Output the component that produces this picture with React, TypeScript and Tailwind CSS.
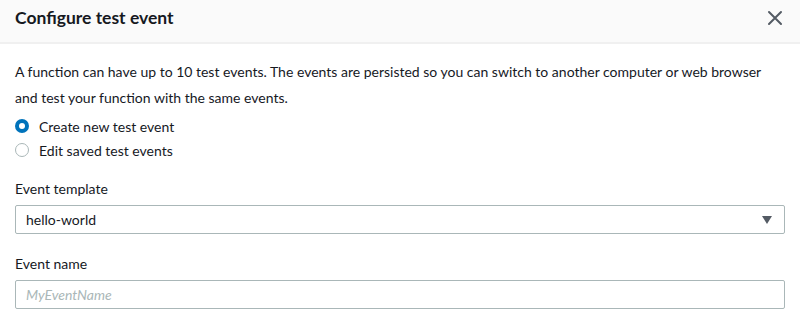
function Radio({ checked, label }: { checked?: boolean; label: string }) {
  return (
    <label className="flex items-center gap-[10px] h-6">
      <span
        className={
          checked
            ? 'w-[14px] h-[14px] rounded-full bg-[#0073bb] flex items-center justify-center'
            : 'w-[14px] h-[14px] rounded-full border border-[#aab7b8] bg-white'
        }
      >
        {checked && <span className="w-[6px] h-[6px] rounded-full bg-white" />}
      </span>
      <span>{label}</span>
    </label>
  )
}

export default function App() {
  return (
    <div className="w-[800px] h-[312px] bg-white text-[#16191f] text-[14px] overflow-hidden font-['Lato',sans-serif]">
      <div className="h-[44px] bg-[#fafafa] border-b-2 border-[#f0f0f0] flex items-center justify-between pl-[15px] pr-[17px] pb-[6px]">
        <h1 className="text-[17.5px] font-bold">Configure test event</h1>
        <svg width="16" height="16" viewBox="0 0 16 16">
          <path d="M2 2l12 12M14 2L2 14" stroke="#545b64" strokeWidth="2" strokeLinecap="round" />
        </svg>
      </div>

      <div className="px-[15px] pt-[15px]">
        <p className="leading-[26px]">
          A function can have up to 10 test events. The events are persisted so you can switch to another computer or web browser and test your function with the same events.
        </p>

        <div className="mt-[3px] flex flex-col">
          <Radio checked label="Create new test event" />
          <Radio label="Edit saved test events" />
        </div>

        <div className="mt-[15px]">
          <div className="leading-[24px]">Event template</div>
          <div className="mt-[4px] h-[29px] border border-[#aab7b8] rounded-[2px] flex items-center justify-between pl-[10px] pr-[11px]">
            <span>hello-world</span>
            <svg width="12" height="10" viewBox="0 0 12 10">
              <path d="M1 1h10L6 9z" fill="#545b64" />
            </svg>
          </div>
        </div>

        <div className="mt-[18px]">
          <div className="leading-[24px]">Event name</div>
          <div className="mt-[4px] h-[29px] border border-[#aab7b8] rounded-[2px] flex items-center pl-[10px]">
            <span className="italic text-[#aab7b8]">MyEventName</span>
          </div>
        </div>
      </div>
    </div>
  )
}
